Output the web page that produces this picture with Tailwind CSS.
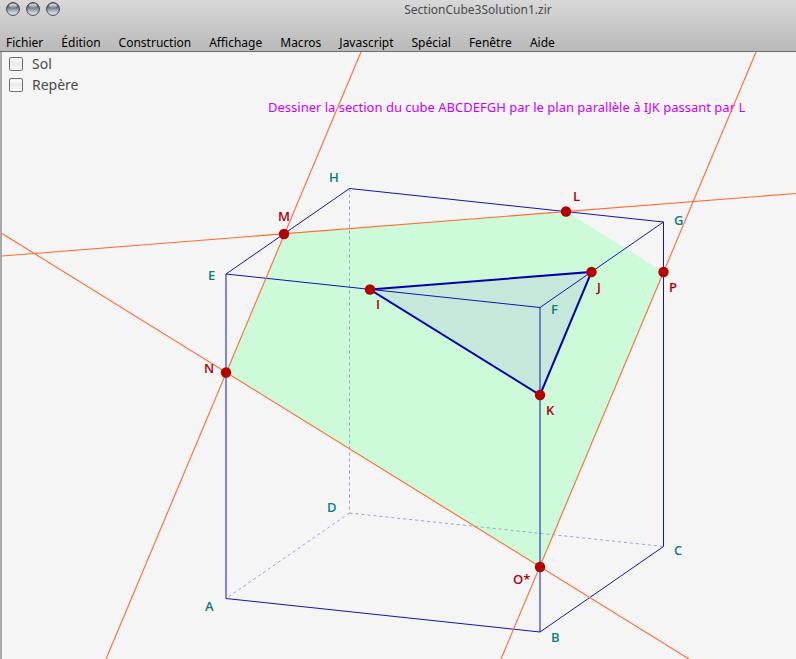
<!DOCTYPE html>
<html lang="fr">
<head>
    <meta charset="UTF-8">
    <meta name="viewport" content="width=device-width, initial-scale=1.0">
    <title>SectionCube3Solution1.zir</title>
    <script src="https://cdn.jsdelivr.net/npm/@tailwindcss/browser@4"></script>
</head>
<body class="min-h-screen flex flex-col bg-[#f5f5f5] font-['Noto_Sans','Open_Sans',sans-serif]">

    <!-- Title bar and menus -->
    <header class="h-[52px] shrink-0 flex flex-col justify-between bg-linear-to-b from-[#d8d8d8] to-[#b9b9b9] border-b border-[#6e6e6e]">
        <div class="flex items-start">
            <div class="w-[160px] shrink-0 flex gap-[6px] pl-[6px] pt-[2px]">
                <button aria-label="Fermer" class="size-[14px]">
                    <svg viewBox="0 0 14 14" class="size-[14px]">
                        <defs>
                            <linearGradient id="ball" x1="0" y1="0" x2="0" y2="1">
                                <stop offset="0" stop-color="#3c4148"/>
                                <stop offset="0.4" stop-color="#727b86"/>
                                <stop offset="0.7" stop-color="#b4c0cc"/>
                                <stop offset="1" stop-color="#eef5fb"/>
                            </linearGradient>
                            <linearGradient id="shine" x1="0" y1="0" x2="0" y2="1">
                                <stop offset="0" stop-color="#fff" stop-opacity="0.9"/>
                                <stop offset="1" stop-color="#fff" stop-opacity="0.2"/>
                            </linearGradient>
                        </defs>
                        <circle cx="7" cy="7" r="6.4" fill="url(#ball)" stroke="#3f444b" stroke-width="1"/>
                        <ellipse cx="7" cy="3.6" rx="4" ry="2.2" fill="url(#shine)"/>
                    </svg>
                </button>
                <button aria-label="Réduire" class="size-[14px]">
                    <svg viewBox="0 0 14 14" class="size-[14px]">
                        <circle cx="7" cy="7" r="6.4" fill="url(#ball)" stroke="#3f444b" stroke-width="1"/>
                        <ellipse cx="7" cy="3.6" rx="4" ry="2.2" fill="url(#shine)"/>
                    </svg>
                </button>
                <button aria-label="Agrandir" class="size-[14px]">
                    <svg viewBox="0 0 14 14" class="size-[14px]">
                        <circle cx="7" cy="7" r="6.4" fill="url(#ball)" stroke="#3f444b" stroke-width="1"/>
                        <ellipse cx="7" cy="3.6" rx="4" ry="2.2" fill="url(#shine)"/>
                    </svg>
                </button>
            </div>
            <h1 class="flex-1 text-center text-[12px] leading-[20px] text-[#4a4a4a]">SectionCube3Solution1.zir</h1>
        </div>
        <nav class="flex gap-[18px] pl-[6px] text-[12px] leading-[16px] text-black">
            <button>Fichier</button>
            <button>Édition</button>
            <button>Construction</button>
            <button>Affichage</button>
            <button>Macros</button>
            <button>Javascript</button>
            <button>Spécial</button>
            <button>Fenêtre</button>
            <button>Aide</button>
        </nav>
    </header>

    <!-- Drawing area -->
    <main class="relative flex-1 overflow-hidden border-l-2 border-[#a8a8a8]">
        <svg class="absolute inset-0 w-full h-full" font-size="13">
            <g transform="translate(-2 -52)">
                <text x="268" y="112" fill="#c800ff">Dessiner la section du cube ABCDEFGH par le plan parallèle à IJK passant par L</text>

                <!-- Section and triangle IJK -->
                <polygon points="284,234 566,211.5 663.5,272 540,567 226,372.5" fill="#cdfad9"/>
                <polygon points="370,289.5 591.5,272 540,395" fill="#c6e8da"/>

                <!-- Hidden edges -->
                <g stroke="#9f9fe0" stroke-dasharray="3 3" fill="none">
                    <path d="M349.5 188.5V513"/>
                    <path d="M349.5 513L226 598.5"/>
                    <path d="M349.5 513L663.5 546.5"/>
                </g>

                <!-- Visible edges -->
                <g stroke="#1414b4" fill="none">
                    <path d="M226 274L349.5 188.5L663.5 222L540 307.5Z"/>
                    <path d="M226 598.5L540 632L663.5 546.5"/>
                    <path d="M226 274V598.5"/>
                    <path d="M540 307.5V632"/>
                    <path d="M663.5 222V546.5"/>
                </g>
                <path d="M370 289.5L591.5 272L540 395Z" fill="none" stroke="#0000aa" stroke-width="2"/>

                <!-- Lines of the section plane -->
                <g stroke="#ff6a35" stroke-width="1.1">
                    <path d="M2 256L796 193.5"/>
                    <path d="M361 52L106 659"/>
                    <path d="M2 233.5L689 659"/>
                    <path d="M756 52L501 659"/>
                </g>

                <g fill="#b40000">
                    <circle cx="284" cy="234" r="5.2"/>
                    <circle cx="566" cy="211.5" r="5.2"/>
                    <circle cx="370" cy="289.5" r="5.2"/>
                    <circle cx="591.5" cy="272" r="5.2"/>
                    <circle cx="663.5" cy="272" r="5.2"/>
                    <circle cx="540" cy="395" r="5.2"/>
                    <circle cx="226" cy="372.5" r="5.2"/>
                    <circle cx="540" cy="567" r="5.2"/>
                </g>

                <g class="font-['Open_Sans','Noto_Sans',sans-serif]" font-weight="600">
                    <g fill="#0a7d7d">
                        <text x="329" y="182">H</text>
                        <text x="674" y="225">G</text>
                        <text x="208" y="280">E</text>
                        <text x="551" y="314">F</text>
                        <text x="327" y="512">D</text>
                        <text x="674" y="555">C</text>
                        <text x="205" y="611">A</text>
                        <text x="551" y="642">B</text>
                    </g>
                    <g fill="#b00010">
                        <text x="278" y="221">M</text>
                        <text x="573" y="201">L</text>
                        <text x="376" y="309">I</text>
                        <text x="597" y="292">J</text>
                        <text x="669" y="292">P</text>
                        <text x="546" y="415">K</text>
                        <text x="204" y="373">N</text>
                        <text x="513" y="584">O*</text>
                    </g>
                </g>
            </g>
        </svg>

        <div class="relative w-fit flex flex-col pl-[7px] pt-px text-[14px] leading-[21px] text-[#4a4a4a]">
            <label class="flex items-center gap-[9px]">
                <input type="checkbox" class="appearance-none size-[14px] rounded-[2px] border border-[#707070] bg-linear-to-b from-white via-[#e8e8e8] to-white checked:bg-[#8ab]">
                Sol
            </label>
            <label class="flex items-center gap-[9px]">
                <input type="checkbox" class="appearance-none size-[14px] rounded-[2px] border border-[#707070] bg-linear-to-b from-white via-[#e8e8e8] to-white checked:bg-[#8ab]">
                Repère
            </label>
        </div>
    </main>

</body>
</html>
